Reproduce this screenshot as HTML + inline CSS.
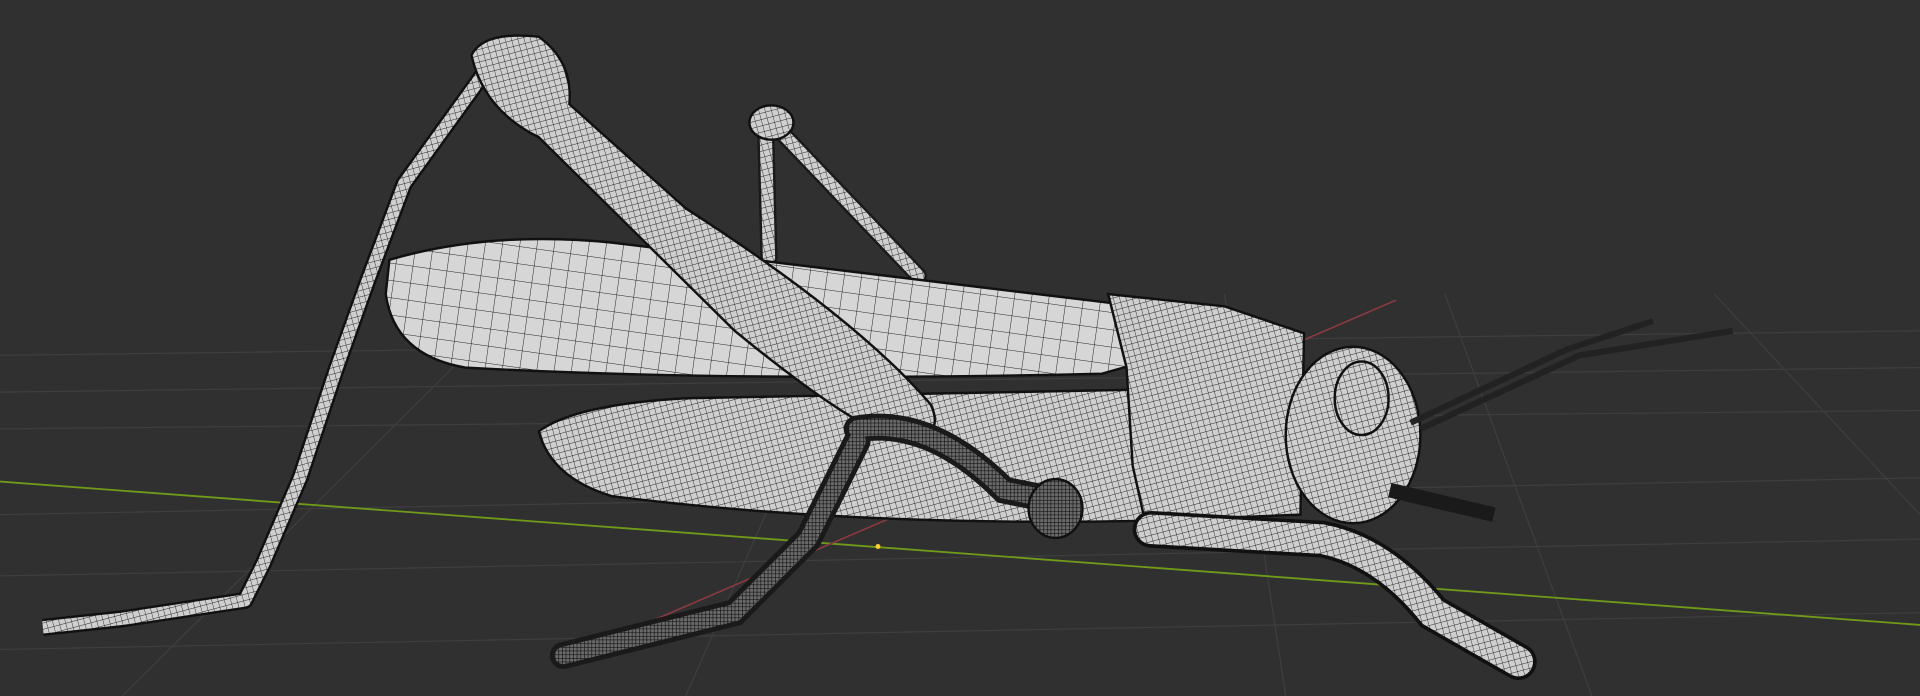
<!DOCTYPE html>
<html><head><meta charset="utf-8"><style>html,body{margin:0;padding:0;background:#303030;overflow:hidden}svg{display:block}</style></head>
<body>
<svg width="1920" height="696" viewBox="0 0 1568 568" preserveAspectRatio="none" xmlns="http://www.w3.org/2000/svg">
<defs>
<pattern id="w" width="5" height="5" patternUnits="userSpaceOnUse" patternTransform="rotate(-15)">
<rect width="5" height="5" fill="#cfcfcf"/><path d="M0 0H5M0 0V5" stroke="#222" stroke-width="0.7"/></pattern>
<pattern id="wl" width="14" height="14" patternUnits="userSpaceOnUse" patternTransform="rotate(8)">
<rect width="14" height="14" fill="#d6d6d6"/><path d="M0 0H14M0 0V14" stroke="#222" stroke-width="0.8"/></pattern>
<pattern id="wd" width="3" height="3" patternUnits="userSpaceOnUse">
<rect width="3" height="3" fill="#6a6a6a"/><path d="M0 0H3M0 0V3" stroke="#111" stroke-width="1"/></pattern>
</defs>
<rect width="1568" height="568" fill="#303030"/>
<g stroke="#3e3e3e" stroke-width="1" fill="none">
<path d="M0 290L1568 270M0 320L1568 300M0 350L1568 335M0 420L1568 390M0 470L1568 440M0 530L1568 500"/>
<path d="M1180 240L1300 568M1000 240L1050 568M1400 240L1568 420M700 250L560 568M400 270L100 568"/>
</g>
<path d="M0 393L1568 510" stroke="#6f9a1a" stroke-width="1.5"/>
<path d="M455 540L1140 245" stroke="#8a3a40" stroke-width="1.3"/>
<path d="M625 95L628 210M640 110L750 225" stroke="#1a1a1a" stroke-width="14" fill="none" stroke-linecap="round"/>
<path d="M625 95L628 210M640 110L750 225" stroke="url(#w)" stroke-width="10" fill="none" stroke-linecap="round"/>
<ellipse cx="630" cy="100" rx="18" ry="14" fill="url(#w)" stroke="#111" stroke-width="2"/>
<path d="M440 352Q470 330 560 325L930 318L935 425Q700 430 500 405Q450 390 440 352Z" fill="url(#w)" stroke="#111" stroke-width="2"/>
<path d="M318 212Q400 188 500 198L930 250L935 295L900 305Q600 312 380 300Q322 290 315 240Z" fill="url(#wl)" stroke="#111" stroke-width="2"/>
<path d="M395 60L330 150L300 230L275 300L245 390L215 460L200 490L100 505L35 512" stroke="#111" stroke-width="14" fill="none" stroke-linejoin="round"/>
<path d="M395 60L330 150L300 230L275 300L245 390L215 460L200 490L100 505L35 512" stroke="url(#w)" stroke-width="10" fill="none" stroke-linejoin="round"/>
<path d="M385 45Q395 25 440 30Q468 50 465 85L560 170Q700 260 760 330Q772 355 742 362Q700 352 600 270L440 112Q395 90 385 45Z" fill="url(#w)" stroke="#111" stroke-width="2"/>
<path d="M905 240L1000 250L1065 272L1062 420L935 425L925 380L920 300Z" fill="url(#w)" stroke="#111" stroke-width="2"/>
<ellipse cx="1105" cy="355" rx="55" ry="72" fill="url(#w)" stroke="#111" stroke-width="2"/>
<ellipse cx="1112" cy="325" rx="22" ry="30" fill="url(#w)" stroke="#111" stroke-width="2"/>
<path d="M1152 345L1280 285L1350 262M1160 350L1290 290L1415 270" stroke="#222" stroke-width="5" fill="none"/>
<path d="M700 350Q760 340 820 400L870 410M700 360L660 440L600 500L460 535" stroke="#1a1a1a" stroke-width="22" fill="none" stroke-linecap="round"/>
<path d="M700 350Q760 340 820 400L870 410M700 360L660 440L600 500L460 535" stroke="url(#wd)" stroke-width="14" fill="none" stroke-linecap="round"/>
<ellipse cx="862" cy="415" rx="22" ry="24" fill="url(#wd)" stroke="#111" stroke-width="2"/>
<path d="M1135 400L1220 420" stroke="#1a1a1a" stroke-width="12" fill="none"/>
<path d="M940 432L1080 440Q1130 450 1170 500L1240 540" stroke="#111" stroke-width="30" fill="none" stroke-linecap="round"/>
<path d="M940 432L1080 440Q1130 450 1170 500L1240 540" stroke="url(#w)" stroke-width="24" fill="none" stroke-linecap="round"/>
<circle cx="717" cy="446" r="2" fill="#ffcc33"/>
</svg>
</body></html>
